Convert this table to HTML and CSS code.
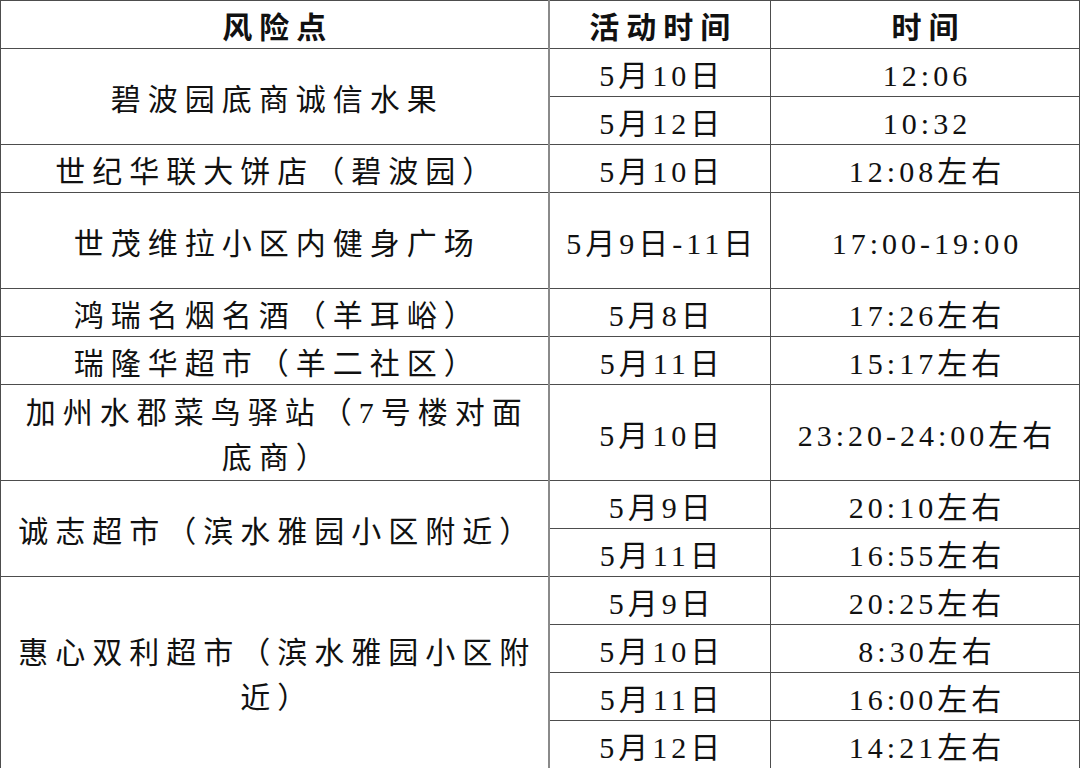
FILE: index.html
```html
<!DOCTYPE html>
<html lang="zh-CN">
<head>
<meta charset="utf-8">
<title>风险点</title>
<link rel="stylesheet" href="styles.css">
</head>
<body>
<table class="risk">
  <colgroup>
    <col class="c-place">
    <col class="c-date">
    <col class="c-time">
  </colgroup>
  <thead>
    <tr>
      <th class="place">风险点</th>
      <th class="num">活动时间</th>
      <th class="num">时间</th>
    </tr>
  </thead>
  <tbody>
    <tr>
      <td class="place" rowspan="2">碧波园底商诚信水果</td>
      <td class="num">5月10日</td>
      <td class="num">12:06</td>
    </tr>
    <tr>
      <td class="num">5月12日</td>
      <td class="num">10:32</td>
    </tr>
    <tr>
      <td class="place">世纪华联大饼店（碧波园）</td>
      <td class="num">5月10日</td>
      <td class="num">12:08左右</td>
    </tr>
    <tr class="tall">
      <td class="place">世茂维拉小区内健身广场</td>
      <td class="num">5月9日-11日</td>
      <td class="num">17:00-19:00</td>
    </tr>
    <tr>
      <td class="place">鸿瑞名烟名酒（羊耳峪）</td>
      <td class="num">5月8日</td>
      <td class="num">17:26左右</td>
    </tr>
    <tr>
      <td class="place">瑞隆华超市（羊二社区）</td>
      <td class="num">5月11日</td>
      <td class="num">15:17左右</td>
    </tr>
    <tr class="tall">
      <td class="place two">加州水郡菜鸟驿站（7号楼对面底商）</td>
      <td class="num">5月10日</td>
      <td class="num">23:20-24:00左右</td>
    </tr>
    <tr>
      <td class="place" rowspan="2">诚志超市（滨水雅园小区附近）</td>
      <td class="num">5月9日</td>
      <td class="num">20:10左右</td>
    </tr>
    <tr>
      <td class="num">5月11日</td>
      <td class="num">16:55左右</td>
    </tr>
    <tr>
      <td class="place two" rowspan="4">惠心双利超市（滨水雅园小区附近）</td>
      <td class="num">5月9日</td>
      <td class="num">20:25左右</td>
    </tr>
    <tr>
      <td class="num">5月10日</td>
      <td class="num">8:30左右</td>
    </tr>
    <tr>
      <td class="num">5月11日</td>
      <td class="num">16:00左右</td>
    </tr>
    <tr>
      <td class="num">5月12日</td>
      <td class="num">14:21左右</td>
    </tr>
  </tbody>
</table>
</body>
</html>
```

FILE: styles.css
```css
html, body {
  margin: 0;
  padding: 0;
  background: #ffffff;
}

.risk {
  width: 1079px;
  border-collapse: collapse;
  table-layout: fixed;
  font-size: 30px;
  color: #111111;
}

.c-place { width: 548px; }
.c-date { width: 222px; }
.c-time { width: 309px; }

.risk tr { height: 48px; }
.risk tr.tall { height: 96px; }

.risk th,
.risk td {
  font-family: "Liberation Serif", "Noto Sans CJK SC", serif;
  font-weight: 400;
  border: 1px solid #4d4d4d;
  padding: 7px 4px 0 4px;
  line-height: 40px;
  text-align: center;
  vertical-align: middle;
}

.risk th {
  font-weight: 700;
  letter-spacing: 7px;
  padding-left: 11px;
}

.risk td.place {
  letter-spacing: 7px;
  padding-left: 8px;
  padding-right: 2px;
  border-right: 2px solid #8a8a8a;
}

.risk th.place {
  border-right: 2px solid #8a8a8a;
}

.risk td.place.two {
  line-height: 45px;
  padding-top: 4px;
}

.risk td.num {
  letter-spacing: 4px;
  padding-left: 8px;
}
```
